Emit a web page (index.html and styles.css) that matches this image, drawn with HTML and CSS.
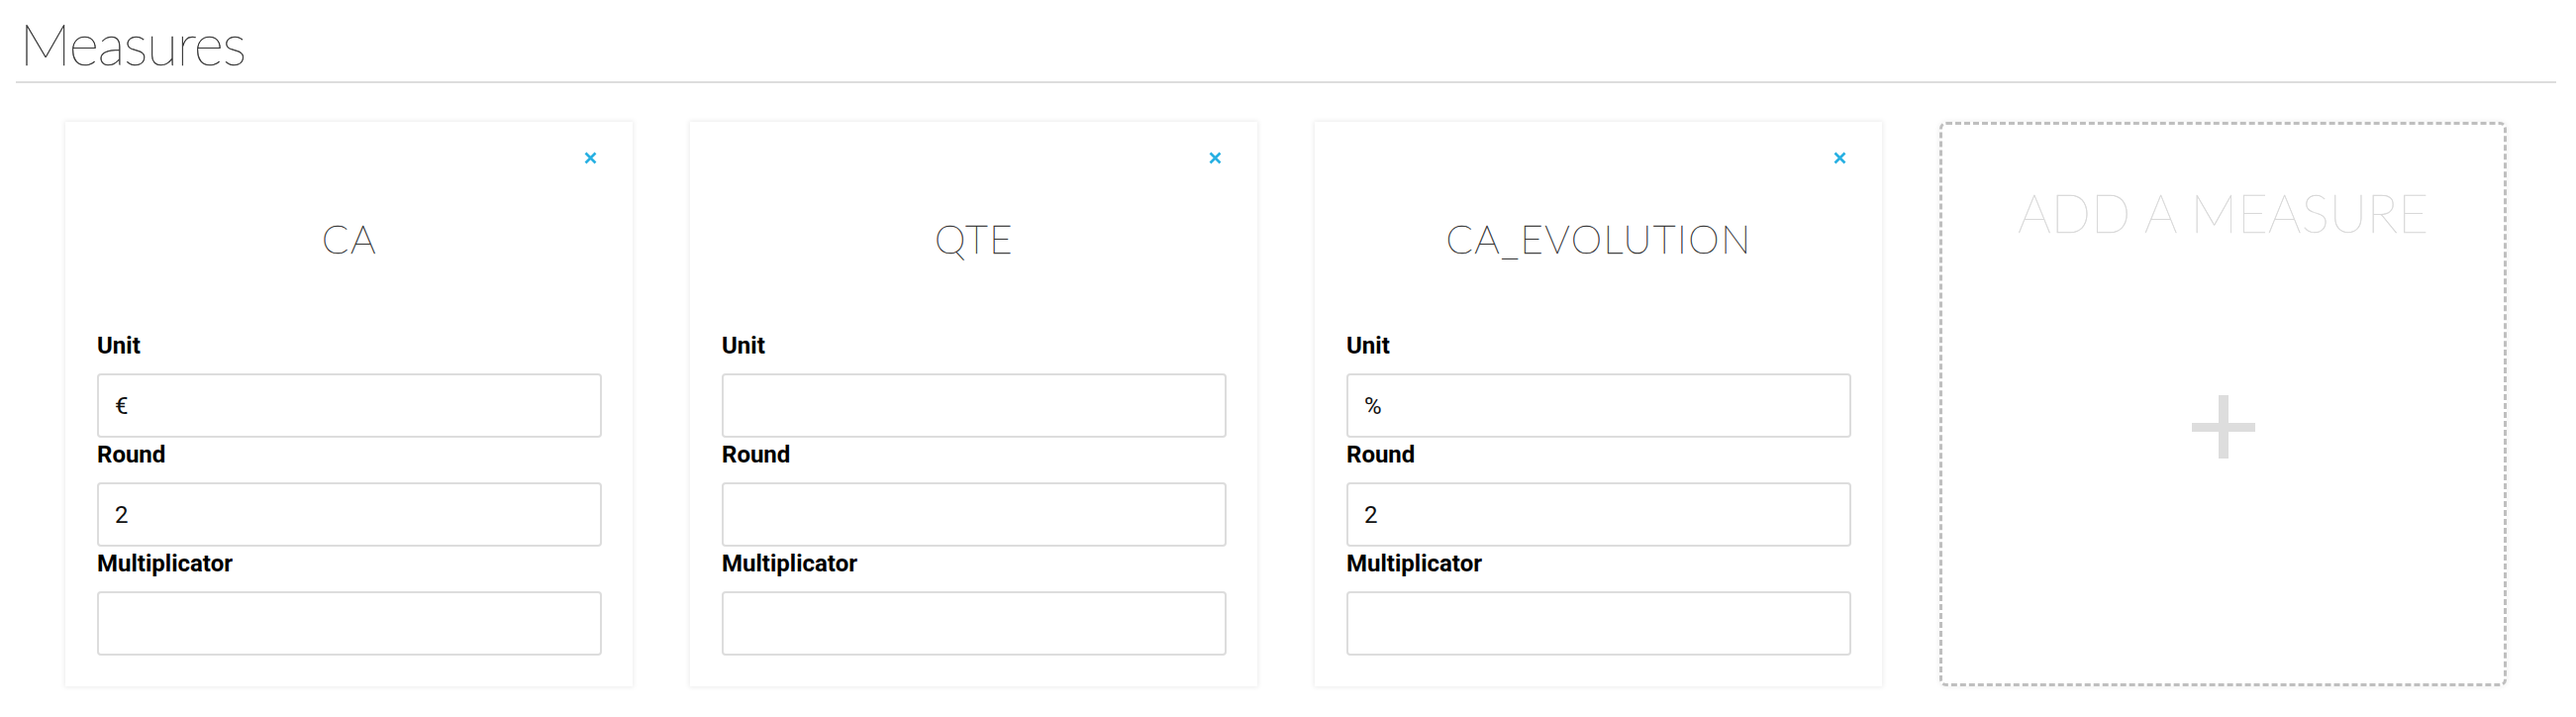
FILE: index.html
```html
<!DOCTYPE html>
<html lang="en">
<head>
<meta charset="utf-8">
<title>Measures</title>
<link rel="stylesheet" href="styles.css">
</head>
<body>
<div class="page">
  <h1 class="page-title">Measures</h1>
  <div class="cards">
    <div class="card">
      <div class="card-head">
        <svg class="close" width="13" height="13" viewBox="0 0 13 13"><path d="M1.5 1.5 L11.5 11.5 M11.5 1.5 L1.5 11.5" stroke="#28b0e2" stroke-width="2.6" stroke-linecap="butt"/></svg>
      </div>
      <div class="card-title">CA</div>
      <label class="field-label">Unit</label>
      <input class="field-input" type="text" value="€">
      <label class="field-label">Round</label>
      <input class="field-input" type="text" value="2">
      <label class="field-label">Multiplicator</label>
      <input class="field-input" type="text" value="">
    </div>
    <div class="card">
      <div class="card-head">
        <svg class="close" width="13" height="13" viewBox="0 0 13 13"><path d="M1.5 1.5 L11.5 11.5 M11.5 1.5 L1.5 11.5" stroke="#28b0e2" stroke-width="2.6" stroke-linecap="butt"/></svg>
      </div>
      <div class="card-title">QTE</div>
      <label class="field-label">Unit</label>
      <input class="field-input" type="text" value="">
      <label class="field-label">Round</label>
      <input class="field-input" type="text" value="">
      <label class="field-label">Multiplicator</label>
      <input class="field-input" type="text" value="">
    </div>
    <div class="card">
      <div class="card-head">
        <svg class="close" width="13" height="13" viewBox="0 0 13 13"><path d="M1.5 1.5 L11.5 11.5 M11.5 1.5 L1.5 11.5" stroke="#28b0e2" stroke-width="2.6" stroke-linecap="butt"/></svg>
      </div>
      <div class="card-title">CA_EVOLUTION</div>
      <label class="field-label">Unit</label>
      <input class="field-input" type="text" value="%">
      <label class="field-label">Round</label>
      <input class="field-input" type="text" value="2">
      <label class="field-label">Multiplicator</label>
      <input class="field-input" type="text" value="">
    </div>
    <div class="card card-add">
      <div class="add-title">ADD A MEASURE</div>
      <div class="add-plus"></div>
    </div>
  </div>
</div>
</body>
</html>
```
FILE: styles.css
```css
html, body {
  margin: 0;
  padding: 0;
  background: #ffffff;
}
body {
  font-family: Roboto, "Liberation Sans", sans-serif;
  color: #000;
}
.page {
  padding: 0 20px 40px 16px;
}
.page-title {
  margin: 0;
  padding: 10px 0 4px 4px;
  font-family: Lato, "Open Sans", sans-serif;
  font-weight: 100;
  font-size: 58px;
  line-height: 68px;
  letter-spacing: -1px;
  color: #333;
  -webkit-text-stroke: 0.5px #333;
  border-bottom: 2px solid #dddddd;
}
.cards {
  display: grid;
  grid-template-columns: repeat(4, 1fr);
  column-gap: 58px;
  padding: 0 50px;
  margin-top: 39px;
  align-items: stretch;
}
.card {
  display: flex;
  flex-direction: column;
  background: #fff;
  padding: 0 31px 31px 32px;
  box-shadow: 0 0 5px 1px rgba(0, 0, 0, 0.08);
}
.card-head {
  display: flex;
  justify-content: flex-end;
  padding: 30px 5px 0 0;
  height: 13px;
}
.close {
  display: block;
}
.card-title {
  margin: 51px 0 67px;
  text-align: center;
  font-family: Lato, "Open Sans", sans-serif;
  font-weight: 100;
  font-size: 40px;
  line-height: 48px;
  letter-spacing: 1.5px;
  color: #333;
  -webkit-text-stroke: 0.45px #333;
}
.field-label {
  display: block;
  margin: 3px 0 14px;
  font-family: Roboto, "Liberation Sans", sans-serif;
  font-weight: 700;
  font-size: 24px;
  line-height: 28px;
  color: #000;
}
.field-input {
  box-sizing: border-box;
  width: 100%;
  height: 65px;
  margin: 0;
  padding: 0 16px;
  border: 2px solid #dddddd;
  border-radius: 4px;
  font-family: Roboto, "Liberation Sans", sans-serif;
  font-size: 24px;
  color: #111;
  background: #fff;
  outline: none;
}
.card-add {
  align-items: center;
  padding: 57px 0 0;
  border: 3px dashed #bfbfbf;
  border-radius: 7px;
  box-shadow: 0 0 5px 1px rgba(0, 0, 0, 0.06);
}
.add-title {
  font-family: Lato, "Open Sans", sans-serif;
  font-weight: 100;
  font-size: 53px;
  line-height: 64px;
  color: #d0d0d0;
  -webkit-text-stroke: 0.4px #d8d8d8;
  white-space: nowrap;
}
.add-plus {
  position: relative;
  width: 64px;
  height: 64px;
  margin-top: 152px;
}
.add-plus::before,
.add-plus::after {
  content: "";
  position: absolute;
  background: #dddddd;
}
.add-plus::before {
  left: 27px;
  top: 0;
  width: 10px;
  height: 64px;
}
.add-plus::after {
  left: 0;
  top: 28px;
  width: 64px;
  height: 9px;
}
```
